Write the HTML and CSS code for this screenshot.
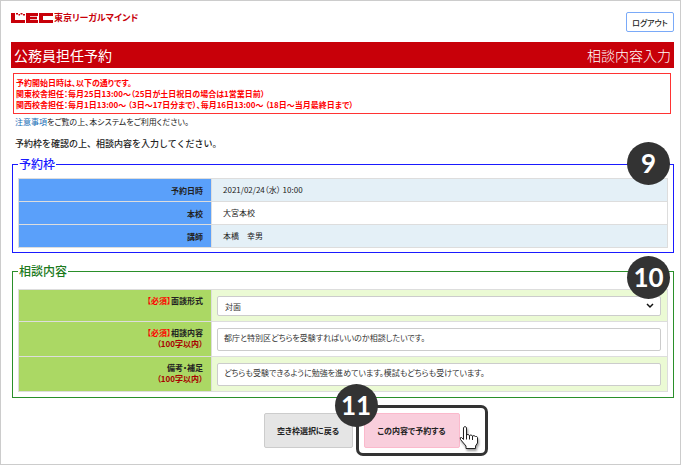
FILE: index.html
```html
<!DOCTYPE html>
<html lang="ja">
<head>
<meta charset="utf-8">
<title>公務員担任予約</title>
<link rel="stylesheet" href="styles.css">
</head>
<body>
<div class="page">
  <header class="header">
    <div class="brand">
      <svg class="brand-mark" viewBox="0 0 42 12" aria-hidden="true">
        <path d="M0 1h4v7h10v3H0zM5 1h2v1.500H5zM7.500 2h1.500v1.500H7.500zM9.500 1h2v1.500h-2zM12 2h2v1.500h-2zM15 1h12v3h-8v.7h7v2.600h-7V8h8v3H15zM28 1h14v3H32v4h10v3H28z"/>
      </svg>
      <span>東京リーガルマインド</span>
    </div>
    <button class="logout" type="button">ログアウト</button>
  </header>

  <div class="titlebar">
    <h1>公務員担任予約</h1>
    <span>相談内容入力</span>
  </div>

  <div class="notice">
    <p>予約開始日時は、以下の通りです。</p>
    <p>関東校舎担任：毎月25日13:00～（25日が土日祝日の場合は1営業日前）</p>
    <p>関西校舎担任：毎月1日13:00～ （3日～17日分まで）、毎月16日13:00～ （18日～当月最終日まで）</p>
  </div>
  <p class="caution"><a href="#">注意事項</a>をご覧の上、本システムをご利用ください。</p>
  <p class="lead">予約枠を確認の上、相談内容を入力してください。</p>

  <form>
    <fieldset class="group slot">
      <legend>予約枠</legend>
      <table>
        <tr><th scope="row">予約日時</th><td>2021/02/24（水） 10:00</td></tr>
        <tr><th scope="row">本校</th><td>大宮本校</td></tr>
        <tr><th scope="row">講師</th><td>本橋　幸男</td></tr>
      </table>
      <span class="badge">9</span>
    </fieldset>

    <fieldset class="group consult">
      <legend>相談内容</legend>
      <table>
        <tr>
          <th scope="row"><label for="style"><em>【必須】</em>面談形式</label></th>
          <td>
            <div class="select">
              <select id="style"><option>対面</option></select>
              <svg viewBox="0 0 8 6" aria-hidden="true"><path d="M1 1l3 3 3-3"/></svg>
            </div>
          </td>
        </tr>
        <tr>
          <th scope="row"><label for="content"><em>【必須】</em>相談内容<small>（100字以内）</small></label></th>
          <td><textarea id="content" rows="1">都庁と特別区どちらを受験すればいいのか相談したいです。</textarea></td>
        </tr>
        <tr>
          <th scope="row"><label for="remarks">備考・補足<small>（100字以内）</small></label></th>
          <td><textarea id="remarks" rows="1">どちらも受験できるように勉強を進めています。模試もどちらも受けています。</textarea></td>
        </tr>
      </table>
      <span class="badge">10</span>
    </fieldset>

    <div class="actions">
      <button class="back" type="button">空き枠選択に戻る</button>
      <div class="focus">
        <button class="submit" type="submit">この内容で予約する</button>
        <span class="badge">11</span>
        <svg class="hand" viewBox="0 0 22 26" aria-hidden="true">
          <path d="M5.500 2.500q1.500-2 3 0V10q1.500-1.500 3 .5q1.500-1.500 3 .5q1.500-1 3 .5q1.500-.5 2 1V18l-2 3v2.500H8V21l-5.500-6.500q-1-2.500 1-2l2 2z"/>
          <path d="M8.500 9.500v5M11.500 10.500v4M14.500 11v4"/>
        </svg>
      </div>
    </div>
  </form>
</div>
</body>
</html>
```

FILE: styles.css
```css
* {
  box-sizing: border-box;
}

body {
  margin: 0;
  background: #fff;
  color: #222;
  font-family: "Noto Sans CJK JP", sans-serif;
  font-size: 8px;
  line-height: 11px;
  font-feature-settings: "palt";
}

button,
select,
textarea {
  font: inherit;
  font-feature-settings: inherit;
  color: inherit;
}

p,
h1 {
  margin: 0;
}

.page {
  min-height: 100vh;
  padding: 10px 6px 8px 10px;
  border: 1px solid #ccc;
}

.header {
  display: flex;
  justify-content: space-between;
  align-items: flex-start;
  height: 31px;
}

.brand {
  display: flex;
  align-items: center;
  gap: 1px;
  color: #c80009;
  font-size: 9px;
  font-weight: 700;
  line-height: 14px;
}

.brand-mark {
  width: 42px;
  height: 12px;
  fill: currentColor;
}

.logout {
  width: 48px;
  height: 20px;
  margin-top: 1px;
  padding: 0;
  border: 1px solid #7aaaf8;
  border-radius: 2px;
  background: #fff;
  font-weight: 500;
}

.titlebar {
  display: flex;
  justify-content: space-between;
  align-items: center;
  height: 26px;
  padding: 0 3px;
  background: #c80009;
  color: #fff;
  font-size: 14px;
}

.titlebar h1 {
  font-size: 14px;
  font-weight: 400;
}

.titlebar span {
  font-weight: 300;
}

.notice {
  margin: 5px 3px 0 2px;
  padding: 3px 2px;
  border: 1px solid #f33;
  color: #f00;
  font-weight: 700;
}

.caution {
  margin: 2px 4px 0;
}

.caution a {
  color: #1a6fb8;
  text-decoration: none;
}

.lead {
  margin: 9px 4px 0;
  font-size: 9px;
  font-weight: 500;
  line-height: 16px;
  font-feature-settings: normal;
}

.group {
  position: relative;
  min-width: 0;
  margin: 4px 0 0 1px;
  padding: 6px 5px 4px;
  border: 1px solid;
}

.group legend {
  padding: 0 1px;
  font-size: 12px;
  font-weight: 500;
  line-height: 16px;
}

.slot {
  border-color: #1a1aff;
}

.slot legend {
  color: #1a1aff;
}

.consult {
  margin-top: 10px;
  padding-top: 10px;
  padding-bottom: 5px;
  border-color: #2a8f2a;
}

.consult legend {
  color: #1c7a1c;
}

table {
  width: 100%;
  border-collapse: collapse;
  table-layout: fixed;
}

th,
td {
  border: 1px solid #ddd;
}

th {
  width: 193px;
  padding: 5px 8px;
  text-align: right;
  font-weight: 700;
}

td {
  padding: 5px 11px 6px;
}

.slot th {
  background: #5aa0fa;
}

.slot tr:nth-child(odd) td {
  background: #e4f0f7;
}

.consult th {
  background: #abd864;
  vertical-align: top;
}

.consult td {
  padding: 6px 6px 5px 5px;
}

.consult tr:nth-child(odd) td {
  background: #ebfad4;
}

th em {
  color: #f00;
  font-style: normal;
}

th small {
  display: block;
  color: #a80000;
  font-size: 8px;
}

select,
textarea {
  display: block;
  width: 100%;
  border: 1px solid #ccc;
  border-radius: 2px;
  background: #fff;
  color: #333;
}

select {
  height: 20px;
  padding: 0 7px;
  appearance: none;
}

textarea {
  height: 23px;
  padding: 3px 6px;
  overflow: hidden;
  resize: none;
}

.select {
  position: relative;
}

.select svg {
  position: absolute;
  top: 7px;
  right: 7px;
  width: 8px;
  height: 6px;
  fill: none;
  stroke: #111;
  stroke-width: 1.5;
}

.badge {
  position: absolute;
  top: -23px;
  right: 3px;
  width: 43px;
  height: 43px;
  border-radius: 50%;
  background: #333;
  color: #fff;
  font-family: Lato, sans-serif;
  font-size: 26px;
  font-weight: 700;
  line-height: 43px;
  text-align: center;
}

.slot .badge {
  top: -30px;
}

.actions {
  display: flex;
  justify-content: center;
  align-items: center;
  gap: 3px;
  margin: 7px 0 0 66px;
}

.actions button {
  height: 35px;
  padding: 0;
  border-radius: 2px;
  font-weight: 700;
}

.back {
  width: 89px;
  border: 1px solid #ccc;
  background: #e5e5e5;
}

.focus {
  position: relative;
  padding: 5px 25px 5px 5px;
  border: 3px solid #333;
  border-radius: 7px;
}

.focus .badge {
  top: -24px;
  left: -24px;
}

.submit {
  display: block;
  width: 96px;
  border: 1px solid #fbb9cc;
  background: #f9cedc;
}

.hand {
  position: absolute;
  right: 5px;
  bottom: 2px;
  width: 22px;
  height: 26px;
  fill: #fff;
  stroke: #222;
  stroke-width: 1;
  filter: drop-shadow(1px 2px 1px #0006);
}
```
